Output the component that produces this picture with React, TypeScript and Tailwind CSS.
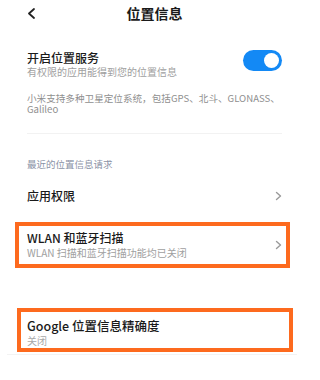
import React from 'react';

const font = { fontFamily: '"Noto Sans CJK SC", "Noto Sans", sans-serif' };

function ChevronRight() {
  return (
    <svg width="7" height="10" viewBox="0 0 7 10" fill="none">
      <path d="M1.5 1.5 L5.5 5 L1.5 8.5" stroke="#9a9a9a" strokeWidth="1.4" strokeLinecap="round" strokeLinejoin="round" />
    </svg>
  );
}

function Toggle() {
  return (
    <div className="w-[39px] h-[21px] rounded-full bg-[#1389f5] flex items-center justify-end pr-[3px]">
      <div className="w-[15px] h-[15px] rounded-full bg-white" />
    </div>
  );
}

export default function App() {
  return (
    <div className="w-[320px] h-[380px] bg-white overflow-hidden pl-[27px] pr-[38px]" style={font}>
      {/* Header */}
      <div className="h-[26px] relative flex items-center justify-center">
        <svg className="absolute left-0 top-[8px]" width="9" height="11" viewBox="0 0 9 11" fill="none">
          <path d="M7 1 L2 5.5 L7 10" stroke="#222" strokeWidth="1.8" strokeLinecap="round" strokeLinejoin="round" />
        </svg>
        <span className="text-[14px] leading-[16px] font-bold text-[#1a1a1a]">位置信息</span>
      </div>

      {/* Location service toggle */}
      <div className="mt-[24px] flex items-start justify-between">
        <div className="flex flex-col">
          <span className="text-[12px] leading-[15px] font-medium text-[#1a1a1a]">开启位置服务</span>
          <span className="text-[10px] leading-[14px] text-[#a0a0a0]">有权限的应用能得到您的位置信息</span>
        </div>
        <Toggle />
      </div>

      <p className="mt-[14px] -mr-[10px] text-[9.6px] leading-[11px] text-[#8f8f8f] whitespace-nowrap">
        小米支持多种卫星定位系统，包括GPS、北斗、GLONASS、
        <br />
        Galileo
      </p>

      <div className="mt-[18px] h-px bg-[#f2f2f2]" />

      <div className="mt-[24px] text-[9.5px] leading-[12px] text-[#8a92a6]">最近的位置信息请求</div>

      <div className="mt-[18px] h-[16px] flex items-center justify-between">
        <span className="text-[12px] leading-[16px] font-medium text-[#1a1a1a]">应用权限</span>
        <ChevronRight />
      </div>

      {/* WLAN scan (highlighted) */}
      <div className="mt-[18px] -ml-[12px] -mr-[8px] border-[4px] border-[#fd6a1e] pl-[8px] pr-[4px] pt-[4px] pb-[4px] flex items-center justify-between">
        <div className="flex flex-col">
          <span className="text-[12px] leading-[16px] font-medium text-[#1a1a1a]">WLAN 和蓝牙扫描</span>
          <span className="text-[10px] leading-[14px] text-[#a0a0a0]">WLAN 扫描和蓝牙扫描功能均已关闭</span>
        </div>
        <ChevronRight />
      </div>

      {/* Google accuracy (highlighted) */}
      <div className="mt-[40px] -ml-[10px] -mr-[11px] border-[4px] border-[#fd6a1e] pl-[6px] pt-[6px] flex flex-col">
        <span className="text-[12.5px] leading-[16px] font-medium text-[#1a1a1a]">Google 位置信息精确度</span>
        <span className="text-[10px] leading-[14px] text-[#a8a8a8]">关闭</span>
      </div>

      <div className="mt-[2px] -ml-[20px] -mr-[15px] h-px bg-[#f3f3f3]" />
    </div>
  );
}
